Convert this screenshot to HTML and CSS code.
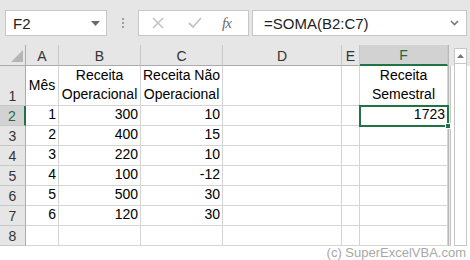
FILE: index.html
```html
<!DOCTYPE html>
<html>
<head>
<meta charset="utf-8">
<link rel="stylesheet" href="styles.css">
</head>
<body>
<div class="fbar">
  <div class="namebox"><span>F2</span><svg class="dd" width="9" height="5" viewBox="0 0 9 5"><path d="M0 0H9L4.5 5Z" fill="#6a6a6a"/></svg></div>
  <div class="dots"><i></i><i></i><i></i></div>
  <div class="fnbox">
    <svg width="12" height="12" viewBox="0 0 12 12"><path d="M1 1L11 11M11 1L1 11" stroke="#c3c3c3" stroke-width="1.6"/></svg>
    <svg width="14" height="12" viewBox="0 0 14 12"><path d="M1 6L5 10L13 1" stroke="#c3c3c3" stroke-width="1.8" fill="none"/></svg>
    <span class="fx">fx</span>
  </div>
  <div class="formula"><span>=SOMA(B2:C7)</span><svg width="9" height="6" viewBox="0 0 9 6"><path d="M1 1L4.5 4.5L8 1" stroke="#777" stroke-width="1.6" fill="none"/></svg></div>
</div>
<div class="sheet">
  <div class="grid">
    <div class="ch corner"><svg width="12" height="12" viewBox="0 0 12 12"><path d="M12 0V12H0Z" fill="#b5b5b5"/></svg></div>
    <div class="ch">A</div><div class="ch">B</div><div class="ch">C</div><div class="ch">D</div><div class="ch">E</div><div class="ch sel">F</div>

    <div class="rh tall">1</div>
    <div class="c tall ctr">Mês</div>
    <div class="c tall ctr">Receita<br>Operacional</div>
    <div class="c tall ctr">Receita Não<br>Operacional</div>
    <div class="c tall"></div><div class="c tall"></div>
    <div class="c tall ctr">Receita<br>Semestral</div>

    <div class="rh rsel">2</div><div class="c num">1</div><div class="c num">300</div><div class="c num">10</div><div class="c"></div><div class="c"></div><div class="c num active">1723<i class="handle"></i></div>
    <div class="rh">3</div><div class="c num">2</div><div class="c num">400</div><div class="c num">15</div><div class="c"></div><div class="c"></div><div class="c"></div>
    <div class="rh">4</div><div class="c num">3</div><div class="c num">220</div><div class="c num">10</div><div class="c"></div><div class="c"></div><div class="c"></div>
    <div class="rh">5</div><div class="c num">4</div><div class="c num">100</div><div class="c num">-12</div><div class="c"></div><div class="c"></div><div class="c"></div>
    <div class="rh">6</div><div class="c num">5</div><div class="c num">500</div><div class="c num">30</div><div class="c"></div><div class="c"></div><div class="c"></div>
    <div class="rh">7</div><div class="c num">6</div><div class="c num">120</div><div class="c num">30</div><div class="c"></div><div class="c"></div><div class="c"></div>
    <div class="rh">8</div><div class="c"></div><div class="c"></div><div class="c"></div><div class="c"></div><div class="c"></div><div class="c"></div>
  </div>
  <div class="vscroll">
    <div class="track"><div class="up"><svg width="7" height="4" viewBox="0 0 7 4"><path d="M0 4H7L3.5 0Z" fill="#777"/></svg></div></div>
  </div>
</div>
<div class="credit">(c) SuperExcelVBA.com</div>
</body>
</html>
```
FILE: styles.css
```css
* { box-sizing: border-box; }
body { margin: 0; background: #fff; font-family: "Liberation Sans", Arial, sans-serif; width: 470px; height: 260px; overflow: hidden; }

.fbar { height: 45px; background: #e6e6e6; display: flex; align-items: flex-start; padding: 10px 3px 0 5px; }
.namebox { width: 102px; height: 26px; background: #fff; border: 1px solid #c6c6c6; display: flex; align-items: center; justify-content: space-between; padding: 0 6px 0 7px; font-size: 15px; color: #222; }
.dots { width: 31px; height: 26px; display: flex; flex-direction: column; align-items: center; justify-content: center; gap: 2px; }
.dots i { width: 2px; height: 2px; background: #a0a0a0; display: block; }
.fnbox { width: 111px; height: 26px; background: #fff; border: 1px solid #c6c6c6; display: flex; align-items: center; padding: 0 0 0 13px; gap: 0; }
.fnbox svg:first-child { margin-right: 24px; }
.fnbox svg:nth-child(2) { margin-right: 20px; }
.fx { font-family: "Liberation Serif", serif; font-style: italic; font-size: 15px; color: #6a6a6a; letter-spacing: -1px; }
.formula { margin-left: 3px; flex: 1; height: 26px; background: #fff; border: 1px solid #c6c6c6; display: flex; align-items: center; justify-content: space-between; padding: 0 7px 0 11px; font-size: 15px; color: #222; }

.sheet { display: flex; }
.grid { display: grid; grid-template-columns: 26px 33px 82px 82px 119px 18px 88px; grid-template-rows: 21px 40px repeat(7, 20px); font-size: 14px; }
.ch { background: #e6e6e6; border-right: 1px solid #c9c9c9; border-bottom: 1px solid #ababab; display: flex; align-items: center; justify-content: center; color: #333; font-size: 14px; padding-top: 1px; }
.ch.corner { justify-content: flex-end; align-items: flex-end; padding: 0 2px 3px 0; border-right-color: #ababab; }
.ch.sel { background: #d2d2d2; border-bottom: 2px solid #217346; color: #1e6b3e; }
.rh { background: #e6e6e6; border-right: 1px solid #ababab; border-bottom: 1px solid #c9c9c9; display: flex; align-items: flex-end; justify-content: center; color: #333; padding-bottom: 1px; }
.rh.rsel { background: #d2d2d2; border-right: 2px solid #217346; color: #1e6b3e; }
.c { border-right: 1px solid #d4d4d4; border-bottom: 1px solid #d4d4d4; color: #000; display: flex; align-items: flex-end; padding: 0 2px 1px 2px; white-space: nowrap; line-height: 19px; }
.c.ctr { justify-content: center; text-align: center; }
.c.tall.ctr { align-items: center; }
.c.num { justify-content: flex-end; }
.c.active { position: relative; outline: 2px solid #217346; outline-offset: -1px; z-index: 1; }
.handle { position: absolute; right: -4px; bottom: -4px; width: 6px; height: 6px; background: #217346; border: 1px solid #fff; }

.vscroll { width: 22px; height: 201px; border-left: 1px solid #b8b8b8; background: #e6e6e6; padding: 3px 3px 0 3px; position: relative; }
.vscroll::before { content: ""; position: absolute; left: 1px; top: 21px; bottom: 0; width: 1px; background: #c6c6c6; }
.vscroll::after { content: ""; position: absolute; left: 2px; top: 21px; bottom: 0; right: 0; background: #fff; }
.track { position: relative; z-index: 1; height: 100%; border: 1px solid #c6c6c6; background: #fff; margin-left: 2px; }
.up { height: 15px; border-bottom: 1px solid #c6c6c6; display: flex; align-items: center; justify-content: center; }

.credit { text-align: right; font-size: 13px; color: #a8a8a8; padding-right: 4px; letter-spacing: 0; line-height: 14px; }
```
